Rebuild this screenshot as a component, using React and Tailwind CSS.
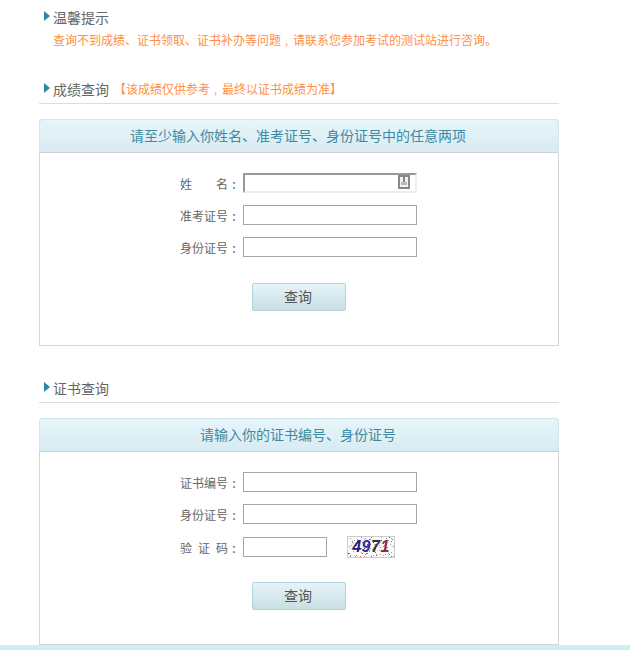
const cjk = 'font-["Liberation_Sans","Noto_Sans_CJK_SC",sans-serif]'

function Comma() {
  return <span className='inline-block w-[12px] pl-[4px] font-["Liberation_Sans",sans-serif]'>,</span>
}

function SectionTitle({ children, note, line }) {
  return (
    <div className={line ? 'flex h-[24px] items-start border-b border-[#ddd] pl-[5px]' : 'flex h-[26px] items-start pl-[5px]'}>
      <span className="mt-[3px] h-0 w-0 border-y-[5px] border-l-[6px] border-y-transparent border-l-[#2d86a3]" />
      <span className="ml-[3px] text-[14px] leading-[20px] text-[#666]">{children}</span>
      {note && <span className="ml-[5px] text-[12px] leading-[20px] text-[#ff8f45]">{note}</span>}
    </div>
  )
}

function Label({ chars }) {
  return (
    <label className="flex w-[203px] pt-[3px] pl-[140px] text-[12px] text-[#666]">
      <span className="flex w-[48px] justify-between">
        {chars.map(c => <span key={c}>{c}</span>)}
      </span>
      <span className="ml-[4px] font-bold text-[#778]">:</span>
    </label>
  )
}

function Field({ chars, wide = true, focused }) {
  return (
    <div className="flex h-[20px] items-center">
      <Label chars={chars} />
      {focused ? (
        <div className="relative h-[20px] w-[174px] border-2 border-[#eee] border-t-[#999] border-l-[#999] bg-white">
          <span className="absolute top-0 right-[5px] flex h-[14px] w-[12px] flex-col items-center border-2 border-[#888] bg-[#f2f2f2]">
            <span className="h-[5px] w-[2px] bg-[#888]" />
            <span className="h-[3px] w-[6px] bg-[#bbb]" />
          </span>
        </div>
      ) : (
        <input className={wide ? 'h-[20px] w-[174px] border border-[#a5a5a5] bg-white' : 'h-[20px] w-[84px] border border-[#a5a5a5] bg-white'} />
      )}
    </div>
  )
}

function QueryButton() {
  return (
    <button className="h-[28px] w-[94px] rounded-[2px] border border-[#b0d3dc] bg-gradient-to-b from-[#e5f4f9] to-[#cadfe3] pr-[2px] text-[14px] text-[#555]">
      查询
    </button>
  )
}

// noise for the captcha, fixed seed so it never changes
function noiseDots() {
  const colors = ['#777', '#c66', '#69c', '#555', '#9a6', '#c96', '#66b', '#c7a', '#aaa', '#999']
  const dots = []
  let seed = 17
  for (let i = 0; i < 110; i++) {
    seed = (seed * 73 + 41) % 1009
    const x = seed % 46
    seed = (seed * 73 + 41) % 1009
    const y = seed % 20
    dots.push([x, y, colors[i % colors.length]])
  }
  return dots
}

function Captcha() {
  return (
    <div className="relative ml-[20px] flex h-[22px] w-[48px] items-center justify-center border border-[#ccc] bg-[#fafafa]">
      <svg className="absolute inset-0" width="46" height="20">
        {noiseDots().map(([x, y, c], i) => (
          <rect key={i} x={x} y={y} width="1" height="1" fill={c} />
        ))}
      </svg>
      <span className='relative text-[16px] leading-none font-bold tracking-[0.5px] text-[#2a1a7a] italic font-["Liberation_Sans",sans-serif]'>
        <span>4</span>
        <span className="text-[#3a2a9a]">9</span>
        <span className="text-[#333]">7</span>
        <span className="text-[#8a2a4a]">1</span>
      </span>
    </div>
  )
}

function Panel({ title, children }) {
  return (
    <div className="mt-[15px] rounded-t-[4px] border-x border-b border-[#d5d5d5]">
      <div className="-mx-px h-[34px] rounded-t-[4px] border border-[#d3e6ec] border-b-[#d0d0d0] bg-gradient-to-b from-[#e6f5fa] to-[#d8ebf2] pr-[2px] text-center text-[14px] leading-[33px] text-[#3d8ba3]">
        {title}
      </div>
      <div className="h-[192px] pt-[20px]">{children}</div>
    </div>
  )
}

export default function App() {
  return (
    <div className={`h-[650px] w-[630px] overflow-hidden bg-white ${cjk}`}>
      <div className="ml-[39px] w-[520px] pt-[8px]">
        <SectionTitle>温馨提示</SectionTitle>
        <p className="-mt-[2px] pl-[14px] text-[12px] leading-[18px] text-[#ff8f45]">
          查询不到成绩、证书领取、证书补办等问题<Comma />请联系您参加考试的测试站进行咨询。
        </p>

        <div className="mt-[30px]">
          <SectionTitle note={<>【该成绩仅供参考<Comma />最终以证书成绩为准】</>} line>成绩查询</SectionTitle>
          <Panel title="请至少输入你姓名、准考证号、身份证号中的任意两项">
            <div className="flex flex-col gap-[12px]">
              <Field chars={['姓', '名']} focused />
              <Field chars={['准', '考', '证', '号']} />
              <Field chars={['身', '份', '证', '号']} />
            </div>
            <div className="mt-[26px] ml-[212px]">
              <QueryButton />
            </div>
          </Panel>
        </div>

        <div className="mt-[33px]">
          <SectionTitle line>证书查询</SectionTitle>
          <Panel title="请输入你的证书编号、身份证号">
            <div className="flex flex-col gap-[12px]">
              <Field chars={['证', '书', '编', '号']} />
              <Field chars={['身', '份', '证', '号']} />
              <div className="flex items-center">
                <Field chars={['验', '证', '码']} wide={false} />
                <Captcha />
              </div>
            </div>
            <div className="mt-[24px] ml-[212px]">
              <QueryButton />
            </div>
          </Panel>
        </div>
      </div>
      <div className="h-[5px] bg-[#d0edf5]" />
    </div>
  )
}
